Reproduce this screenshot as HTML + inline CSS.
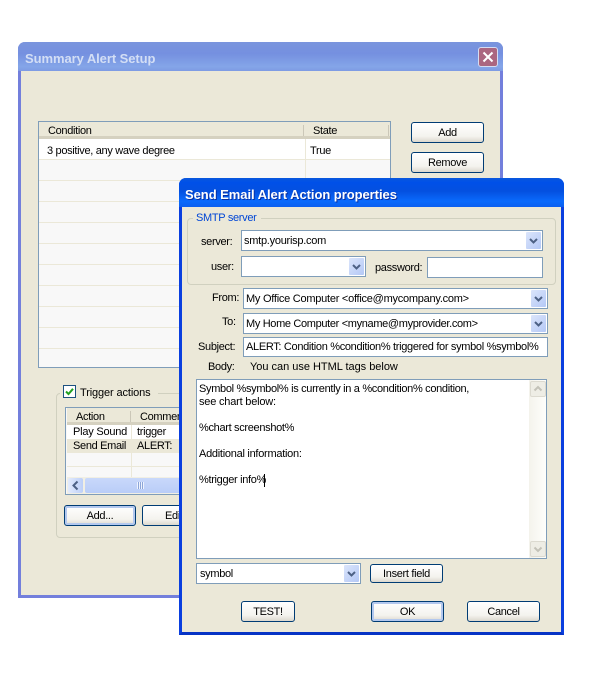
<!DOCTYPE html>
<html><head><meta charset="utf-8"><style>
html,body{margin:0;padding:0;background:#fff}
#r{position:relative;width:610px;height:687px;overflow:hidden;font:11px/13px "Liberation Sans",sans-serif;color:#000;background:#fff}
#r div,#r span.t{position:absolute;box-sizing:border-box}
.t{white-space:nowrap;letter-spacing:-.32px}
.btn{background:linear-gradient(#fff,#f4f3ee 70%,#dcd8ce);border:1px solid #003c74;border-radius:3px;text-align:center;white-space:nowrap;letter-spacing:-.32px}
.inp{background:#fff;border:1px solid #7f9db9}
.arr{background:linear-gradient(135deg,#dbe5fb,#b4c8f6);border-radius:1px}
svg{position:absolute;left:0;top:0}
</style></head><body><div id="r">

<!-- back window -->
<div style="left:18px;top:42px;width:485px;height:556px;background:#ebe8d8;border:3px solid #737fdc;border-top:0;border-radius:7px 7px 0 0"></div>
<div style="left:18px;top:42px;width:485px;height:29px;border-radius:7px 7px 0 0;background:linear-gradient(#7a95dd,#7590e0 40%,#84a5e8 85%,#7e9be4)"></div>
<span class="t" style="left:25px;top:51px;font-size:13px;line-height:16px;color:#d3def5;letter-spacing:-.07px;font-weight:bold">Summary Alert Setup</span>
<div style="left:478px;top:47px;width:20px;height:20px;border:1px solid #d5dcf2;border-radius:3px;background:#ab6680"></div>
<svg style="left:478px;top:47px" width="20" height="20"><path d="M5.5 5.5L14.5 14.5M14.5 5.5L5.5 14.5" stroke="#fff" stroke-width="2"/></svg>

<!-- main list -->
<div style="left:38px;top:121px;width:353px;height:247px;background:#f8f8f8;border:1px solid #7f9db9"></div>
<div style="left:39px;top:122px;width:351px;height:17px;background:#ebe8d8;border-bottom:3px solid #d5d1c0"></div>
<div style="left:303px;top:125px;width:1px;height:11px;background:#cbc7b8"></div>
<div style="left:388px;top:125px;width:1px;height:11px;background:#cbc7b8"></div>
<span class="t" style="left:48px;top:125px">Condition</span>
<span class="t" style="left:313px;top:125px">State</span>
<div style="left:39px;top:139px;width:351px;height:20px;background:#fff"></div>
<span class="t" style="left:47px;top:145px">3 positive, any wave degree</span>
<span class="t" style="left:310px;top:145px">True</span>
<div style="left:39px;top:159px;width:351px;height:1px;background:#ebe8d8"></div>
<div style="left:39px;top:180px;width:351px;height:1px;background:#ebe8d8"></div>
<div style="left:39px;top:201px;width:351px;height:1px;background:#ebe8d8"></div>
<div style="left:39px;top:222px;width:351px;height:1px;background:#ebe8d8"></div>
<div style="left:39px;top:243px;width:351px;height:1px;background:#ebe8d8"></div>
<div style="left:39px;top:264px;width:351px;height:1px;background:#ebe8d8"></div>
<div style="left:39px;top:285px;width:351px;height:1px;background:#ebe8d8"></div>
<div style="left:39px;top:306px;width:351px;height:1px;background:#ebe8d8"></div>
<div style="left:39px;top:327px;width:351px;height:1px;background:#ebe8d8"></div>
<div style="left:39px;top:348px;width:351px;height:1px;background:#ebe8d8"></div>
<div style="left:305px;top:139px;width:1px;height:228px;background:#ebe8d8"></div>

<div class="btn" style="left:411px;top:122px;width:73px;height:21px;line-height:21px">Add</div>
<div class="btn" style="left:411px;top:152px;width:73px;height:21px;line-height:21px">Remove</div>

<!-- trigger group -->
<div style="left:56px;top:393px;width:140px;height:145px;border:1px solid #d0d0bf;border-radius:4px"></div>
<div style="left:60px;top:385px;width:98px;height:16px;background:#ebe8d8"></div>
<div style="left:63px;top:385px;width:13px;height:13px;background:#fff;border:1px solid #1c5180"></div>
<svg style="left:63px;top:385px" width="13" height="13"><path d="M3 6.5L5.5 9L10 3.8" fill="none" stroke="#21a121" stroke-width="2"/></svg>
<span class="t" style="left:80px;top:387px;letter-spacing:-.12px">Trigger actions</span>

<div style="left:65px;top:407px;width:125px;height:88px;background:#f8f8f8;border:1px solid #7f9db9"></div>
<div style="left:67px;top:408px;width:115px;height:17px;background:#ebe8d8;border-bottom:3px solid #d5d1c0"></div>
<div style="left:130px;top:411px;width:1px;height:11px;background:#cbc7b8"></div>
<span class="t" style="left:76px;top:411px">Action</span>
<span class="t" style="left:140px;top:411px">Commen</span>
<div style="left:67px;top:425px;width:115px;height:14px;background:#fff"></div>
<div style="left:67px;top:439px;width:115px;height:14px;background:#ebe8d8"></div>
<span class="t" style="left:73px;top:426px;letter-spacing:-.22px">Play Sound</span>
<span class="t" style="left:137px;top:426px">trigger</span>
<span class="t" style="left:73px;top:440px">Send Email</span>
<span class="t" style="left:137px;top:440px">ALERT:</span>
<div style="left:67px;top:466px;width:115px;height:1px;background:#ebe8d8"></div>
<div style="left:131px;top:425px;width:1px;height:52px;background:#ebe8d8"></div>
<div style="left:67px;top:477px;width:115px;height:17px;background:#f1efe4"></div>
<div style="left:68px;top:478px;width:15px;height:15px;background:linear-gradient(90deg,#e2ebfd,#bdcff8);border-radius:2px"></div>
<svg style="left:68px;top:478px" width="15" height="15"><path d="M9.5 3.5L5.5 7.5L9.5 11.5" fill="none" stroke="#4d6185" stroke-width="2"/></svg>
<div style="left:85px;top:478px;width:97px;height:15px;background:linear-gradient(#c9d8fa,#b9cdf8);border-radius:2px"></div>
<div style="left:137px;top:482px;width:7px;height:7px;background:repeating-linear-gradient(90deg,#eef3fe 0 1px,#8ca5d8 1px 2px)"></div>

<div class="btn" style="left:64px;top:505px;width:72px;height:21px;line-height:21px;border-color:#003c74;box-shadow:inset 0 0 0 2px #b3c8ee">Add...</div>
<div class="btn" style="left:142px;top:505px;width:60px;height:21px;line-height:21px;text-align:left;padding-left:22px">Edit</div>

<!-- front window -->
<div style="left:179px;top:178px;width:385px;height:457px;background:#ebe8d8;border:3px solid #0a3fdf;border-top:0;border-bottom-color:#0633c5;border-radius:7px 7px 0 0"></div>
<div style="left:179px;top:178px;width:385px;height:29px;border-radius:7px 7px 0 0;background:linear-gradient(#0a58dd,#0050e8 15%,#0450e0 45%,#0a6afc 80%,#0b5ff0)"></div>
<span class="t" style="left:185px;top:187px;font-size:13px;line-height:16px;color:#fff;letter-spacing:-.05px;font-weight:bold;text-shadow:1px 1px 0 #0a2fa0">Send Email Alert Action properties</span>

<!-- SMTP group -->
<div style="left:187px;top:218px;width:369px;height:67px;border:1px solid #d0d0bf;border-radius:4px"></div>
<div style="left:193px;top:212px;width:68px;height:14px;background:#ebe8d8"></div>
<span class="t" style="left:196px;top:212px;color:#0046d5">SMTP server</span>

<span class="t" style="left:201px;top:236px">server:</span>
<div class="inp" style="left:241px;top:230px;width:302px;height:21px"></div>
<span class="t" style="left:244px;top:235px;letter-spacing:-.26px">smtp.yourisp.com</span>
<div class="arr" style="left:526px;top:232px;width:15px;height:17px"></div>
<svg style="left:526px;top:232px" width="15" height="17"><path d="M4 7L7.5 10.5L11 7" fill="none" stroke="#4d6185" stroke-width="2"/></svg>

<span class="t" style="left:211px;top:261px">user:</span>
<div class="inp" style="left:241px;top:256px;width:125px;height:21px"></div>
<div class="arr" style="left:349px;top:258px;width:15px;height:17px"></div>
<svg style="left:349px;top:258px" width="15" height="17"><path d="M4 7L7.5 10.5L11 7" fill="none" stroke="#4d6185" stroke-width="2"/></svg>

<span class="t" style="left:375px;top:262px">password:</span>
<div class="inp" style="left:427px;top:257px;width:116px;height:21px"></div>

<span class="t" style="left:212px;top:292px">From:</span>
<div class="inp" style="left:243px;top:288px;width:305px;height:21px"></div>
<span class="t" style="left:246px;top:293px;letter-spacing:-.25px">My Office Computer &lt;office@mycompany.com&gt;</span>
<div class="arr" style="left:531px;top:290px;width:15px;height:17px"></div>
<svg style="left:531px;top:290px" width="15" height="17"><path d="M4 7L7.5 10.5L11 7" fill="none" stroke="#4d6185" stroke-width="2"/></svg>

<span class="t" style="left:222px;top:316px">To:</span>
<div class="inp" style="left:243px;top:313px;width:305px;height:21px"></div>
<span class="t" style="left:246px;top:318px;letter-spacing:-.34px">My Home Computer &lt;myname@myprovider.com&gt;</span>
<div class="arr" style="left:531px;top:315px;width:15px;height:17px"></div>
<svg style="left:531px;top:315px" width="15" height="17"><path d="M4 7L7.5 10.5L11 7" fill="none" stroke="#4d6185" stroke-width="2"/></svg>

<span class="t" style="left:198px;top:341px">Subject:</span>
<div class="inp" style="left:243px;top:337px;width:305px;height:20px"></div>
<span class="t" style="left:246px;top:341px">ALERT: Condition %condition% triggered for symbol %symbol%</span>

<span class="t" style="left:208px;top:361px">Body:</span>
<span class="t" style="left:250px;top:361px;letter-spacing:-.02px">You can use HTML tags below</span>

<div class="inp" style="left:196px;top:379px;width:351px;height:180px"></div>
<div style="left:529px;top:380px;width:17px;height:178px;background:linear-gradient(90deg,#f4f3ec,#fefefb)"></div>
<div style="left:530px;top:381px;width:16px;height:16px;background:#eeede5;border:1px solid #dcdad0;border-radius:2px"></div>
<svg style="left:530px;top:381px" width="16" height="16"><path d="M4.5 9.5L8 6L11.5 9.5" fill="none" stroke="#c3c2b8" stroke-width="2"/></svg>
<div style="left:530px;top:541px;width:16px;height:16px;background:#eeede5;border:1px solid #dcdad0;border-radius:2px"></div>
<svg style="left:530px;top:541px" width="16" height="16"><path d="M4.5 6.5L8 10L11.5 6.5" fill="none" stroke="#c3c2b8" stroke-width="2"/></svg>

<span class="t" style="left:199px;top:383px">Symbol %symbol% is currently in a %condition% condition,</span>
<span class="t" style="left:199px;top:396px;letter-spacing:-.2px">see chart below:</span>
<span class="t" style="left:199px;top:422px">%chart screenshot%</span>
<span class="t" style="left:199px;top:448px;letter-spacing:-.27px">Additional information:</span>
<span class="t" style="left:199px;top:474px">%trigger info%</span>
<div style="left:264px;top:474px;width:1px;height:13px;background:#000"></div>

<div class="inp" style="left:196px;top:563px;width:165px;height:21px"></div>
<span class="t" style="left:200px;top:568px">symbol</span>
<div class="arr" style="left:344px;top:565px;width:15px;height:17px"></div>
<svg style="left:344px;top:565px" width="15" height="17"><path d="M4 7L7.5 10.5L11 7" fill="none" stroke="#4d6185" stroke-width="2"/></svg>

<div class="btn" style="left:370px;top:564px;width:73px;height:19px;line-height:18px">Insert field</div>
<div class="btn" style="left:241px;top:601px;width:54px;height:21px;line-height:21px">TEST!</div>
<div class="btn" style="left:371px;top:601px;width:73px;height:21px;line-height:21px;box-shadow:inset 0 0 0 2px #b3c8ee">OK</div>
<div class="btn" style="left:467px;top:601px;width:73px;height:21px;line-height:21px">Cancel</div>
</div></body></html>
